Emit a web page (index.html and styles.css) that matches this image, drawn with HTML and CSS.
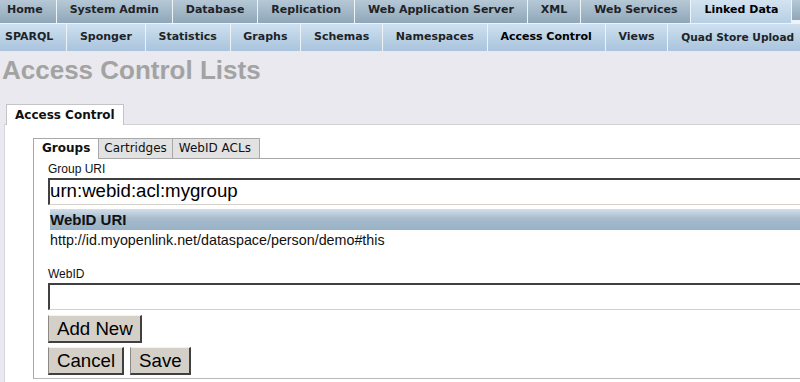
FILE: index.html
```html
<!DOCTYPE html>
<html>
<head>
<meta charset="utf-8">
<title>Access Control Lists</title>
<link rel="stylesheet" href="styles.css">
</head>
<body>
<nav class="topnav">
  <ul class="menu menu-main">
    <li>Home</li>
    <li>System Admin</li>
    <li>Database</li>
    <li>Replication</li>
    <li>Web Application Server</li>
    <li>XML</li>
    <li>Web Services</li>
    <li class="active">Linked Data</li>
    <li class="stub"></li>
  </ul>
  <ul class="menu menu-sub">
    <li>SPARQL</li>
    <li>Sponger</li>
    <li>Statistics</li>
    <li>Graphs</li>
    <li>Schemas</li>
    <li>Namespaces</li>
    <li class="active">Access Control</li>
    <li>Views</li>
    <li class="last">Quad Store Upload</li>
  </ul>
</nav>
<h1 class="page-title">Access Control Lists</h1>
<div class="tabset outer">
  <div class="tabs outer-tabs"><span class="tab active">Access Control</span></div>
  <div class="panel outer-panel">
    <div class="tabs inner-tabs">
      <span class="itab active">Groups</span><span class="itab">Cartridges</span><span class="itab wide">WebID ACLs</span>
    </div>
    <div class="panel inner-panel">
      <label class="field-label">Group URI</label>
      <input class="field-input" type="text" value="urn:webid:acl:mygroup">
      <div class="list-head">WebID URI</div>
      <div class="list-row">http://id.myopenlink.net/dataspace/person/demo#this</div>
      <label class="field-label label-webid">WebID</label>
      <input class="field-input input-webid" type="text" value="">
      <div class="btn-row first"><button class="btn">Add New</button></div>
      <div class="btn-row"><button class="btn">Cancel</button><button class="btn">Save</button></div>
    </div>
  </div>
</div>
</body>
</html>
```
FILE: styles.css
```css
html, body {
  margin: 0;
  padding: 0;
  overflow: hidden;
  height: 100%;
}
body {
  background: #e9e9ef;
  font-family: "Liberation Sans", Arial, sans-serif;
  color: #000;
}
.topnav {
  background: #eef3f7;
}
.menu {
  list-style: none;
  margin: 0;
  padding: 0;
  display: flex;
  white-space: nowrap;
  overflow: hidden;
  font-family: "DejaVu Sans", Verdana, sans-serif;
  font-weight: bold;
  font-size: 11px;
  color: #1e2328;
}
.menu li {
  flex: none;
  padding: 0 13px;
  border-left: 1px solid #eef3f7;
  line-height: 20px;
}
.menu li:first-child {
  border-left: none;
  padding-left: 7px;
}
.menu-main {
  border-bottom: 1px solid #eef3f7;
}
.menu-main li {
  height: 20px;
  padding-bottom: 3px;
  background: linear-gradient(#b6c8d6, #8fa7b9);
}
.menu-main li.active {
  background: linear-gradient(#d3e3f0, #b7cfe3);
  color: #000;
}
.menu-main li.stub {
  flex: 1 0 20px;
  padding: 0;
}
.menu-sub li {
  height: 20px;
  padding: 3px 12.8px 4px;
  background: linear-gradient(#cde0f0, #a9c4dc);
}
.menu-sub li:first-child {
  padding-left: 5px;
}
.menu-sub li.active {
  color: #000;
}
.menu-sub li.last {
  flex: 1 0 auto;
  font-size: 10.6px;
}
.page-title {
  margin: 4px 0 0 0;
  padding-left: 2px;
  font-family: "Liberation Sans", Arial, sans-serif;
  font-weight: bold;
  font-size: 26px;
  line-height: 30px;
  color: #a3a3a3;
}
.tabset.outer {
  margin: 19px 0 0 4px;
}
.tabs {
  display: flex;
  align-items: flex-end;
}
.outer-tabs {
  padding-left: 2px;
}
.tab {
  display: block;
  font-family: "DejaVu Sans", Verdana, sans-serif;
  font-weight: bold;
  font-size: 12px;
  line-height: 18px;
  padding: 1px 8px 0;
  background: #fff;
  border: 1px solid #c4c4c4;
  border-bottom: none;
  position: relative;
  margin-bottom: -1px;
  height: 21px;
  box-sizing: border-box;
  color: #111;
}
.panel {
  background: #fff;
}
.outer-panel {
  border-top: 1px solid #d0d0d0;
  border-left: 1px solid #d6d6dc;
  padding: 13px 0 5px 28px;
  overflow: hidden;
}
.inner-tabs {
  font-family: "DejaVu Sans", Verdana, sans-serif;
  font-size: 12px;
}
.itab {
  display: block;
  height: 20px;
  box-sizing: border-box;
  line-height: 19px;
  padding: 0 5px;
  background: #e2e2e2;
  border: 1px solid #a8a8a8;
  border-bottom: none;
  border-left: none;
  color: #111;
}
.itab.wide {
  padding: 0 8px 0 6px;
}
.itab.active {
  background: #fff;
  font-weight: bold;
  padding: 0 8px;
  border-left: 1px solid #a8a8a8;
  position: relative;
  margin-bottom: -1px;
  height: 21px;
}
.inner-panel {
  border-top: 1px solid #a8a8a8;
  border-left: 1px solid #a8a8a8;
  border-bottom: 1px solid #b8b8b8;
  padding: 3px 0 3px 14px;
  margin-right: -40px;
}
.field-label {
  display: block;
  font-size: 12px;
  line-height: 14px;
  color: #111;
}
.field-input {
  display: block;
  box-sizing: border-box;
  width: 100%;
  height: 27px;
  margin: 2px 0 0 0;
  padding: 0 0 3px 0;
  font-family: "Liberation Sans", Arial, sans-serif;
  font-size: 18.67px;
  color: #000;
  background: #fff;
  border-top: 2px solid #404040;
  border-left: 2px solid #404040;
  border-right: 1px solid #d4d0c8;
  border-bottom: 1px solid #d4d0c8;
  outline: none;
}
.list-head {
  margin: 4px 0 0 2px;
  height: 21px;
  line-height: 21px;
  font-weight: bold;
  font-size: 15px;
  color: #111;
  background: linear-gradient(#d3dfe9, #a7bccd 45%, #98b1c5);
}
.list-row {
  margin-left: 2px;
  font-size: 14.3px;
  line-height: 20px;
  color: #111;
}
.label-webid {
  margin-top: 17px;
}
.input-webid {
  margin-top: 2px;
}
.btn-row {
  display: flex;
  gap: 6px;
  margin-top: 4px;
}
.btn-row.first {
  margin-top: 5px;
}
.btn {
  height: 28px;
  box-sizing: border-box;
  padding: 0 7px 0 8px;
  font-family: "Liberation Sans", Arial, sans-serif;
  font-size: 18.67px;
  line-height: 24px;
  color: #000;
  background: #d4d0c8;
  border-top: 1px solid #f4f2ee;
  border-left: 1px solid #8a8884;
  border-right: 2px solid #404040;
  border-bottom: 2px solid #404040;
  border-radius: 0;
}
```
